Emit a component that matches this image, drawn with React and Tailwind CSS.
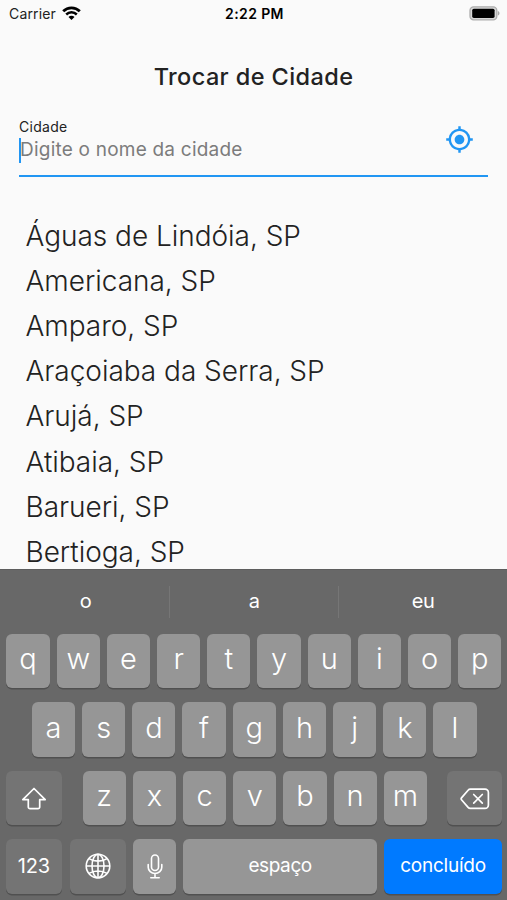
import React from 'react';
import { MdGpsFixed } from 'react-icons/md';

const cities = [
  'Águas de Lindóia, SP',
  'Americana, SP',
  'Amparo, SP',
  'Araçoiaba da Serra, SP',
  'Arujá, SP',
  'Atibaia, SP',
  'Barueri, SP',
  'Bertioga, SP',
];

const suggestions = ['o', 'a', 'eu'];

function StatusBar() {
  return (
    <div className="grid grid-cols-3 items-center h-[27px] pl-[9px] pr-[7px] text-black">
      <div className="flex items-center gap-[6px]">
        <span className="text-[14px] tracking-[0.15px] text-[#222222]">Carrier</span>
        <svg width="19" height="14" viewBox="0 0 19 14" fill="none" stroke="currentColor" className="-mt-px">
          <path d="M1.2 5.2a11.8 11.8 0 0 1 16.6 0" strokeWidth="2.8" />
          <path d="M4.2 8.5a7.6 7.6 0 0 1 10.6 0" strokeWidth="2.5" />
          <path d="M9.5 14 6.5 11a4.2 4.2 0 0 1 6 0z" fill="currentColor" stroke="none" />
        </svg>
      </div>
      <span className="text-center text-[14px] font-semibold tracking-[0.4px]">2:22 PM</span>
      <svg className="justify-self-end" width="31" height="15" viewBox="0 0 31 15">
        <rect x="1" y="0.8" width="26.8" height="13" rx="3.6" fill="#d8d8d8" stroke="#adadad" strokeWidth="1.3" />
        <rect x="3.2" y="2.7" width="22.4" height="9.2" rx="1.6" fill="#000" />
        <path d="M28.8 5v4.6c1-.4 1.7-1.2 1.7-2.3S29.8 5.4 28.8 5z" fill="#a9a9a9" />
      </svg>
    </div>
  );
}

function Key({ children, className = 'w-[43.2px] bg-[#969696] text-[29px] font-[350] pb-[4px]' }) {
  return (
    <button
      className={`flex h-[54.5px] shrink-0 items-center justify-center rounded-[6px] leading-none text-white shadow-[0_1.5px_0_#505050] ${className}`}
    >
      {children}
    </button>
  );
}

function KeyRow({ letters }) {
  return (
    <div className="flex gap-[7px]">
      {letters.split('').map((letter) => (
        <Key key={letter}>{letter}</Key>
      ))}
    </div>
  );
}

function Keyboard() {
  return (
    <div className="h-[331px] shrink-0 bg-[#686868] border-t border-[#5d5d5d] text-white">
      <div className="grid h-[63.5px] grid-cols-3 items-center">
        {suggestions.map((word, i) => (
          <div
            key={word}
            className={`flex h-[32px] items-center justify-center pb-[2px] text-[20px] tracking-[-0.6px] ${i > 0 ? 'border-l border-[#767676]' : 'pl-[2px]'}`}
          >
            {word}
          </div>
        ))}
      </div>

      <div className="flex flex-col gap-[14px]">
        <div className="flex justify-center pl-[0.8px]">
          <KeyRow letters="qwertyuiop" />
        </div>
        <div className="flex justify-center pl-[1.5px]">
          <KeyRow letters="asdfghjkl" />
        </div>
        <div className="flex justify-between pr-[5px] pl-[6px]">
          <Key className="w-[55.5px] bg-[#747474]">
            <svg width="26" height="24" viewBox="0 0 26 24" fill="none" stroke="currentColor" strokeWidth="1.7" strokeLinejoin="round" className="mt-[2px] ml-px">
              <path d="M13 1.5 24.2 12.6H18.7V20a1.7 1.7 0 0 1-1.7 1.7H9A1.7 1.7 0 0 1 7.3 20V12.6H1.8z" />
            </svg>
          </Key>
          <div className="pl-px">
            <KeyRow letters="zxcvbnm" />
          </div>
          <Key className="w-[55px] bg-[#747474]">
            <svg width="30" height="22" viewBox="0 0 30 22" fill="none" stroke="currentColor" strokeWidth="1.7" strokeLinejoin="round" strokeLinecap="round" className="mt-[2px]">
              <path d="M10.3 1.2H25a3.4 3.4 0 0 1 3.4 3.4V17a3.4 3.4 0 0 1-3.4 3.4H10.3a3 3 0 0 1-2.2-1L1.5 11.7a1.4 1.4 0 0 1 0-1.8L8.1 2.2a3 3 0 0 1 2.2-1z" />
              <path d="m13.7 6.5 8.6 8.6M22.3 6.5l-8.6 8.6" />
            </svg>
          </Key>
        </div>
        <div className="flex px-[5.7px]">
          <Key className="w-[56.3px] bg-[#747474] text-[20px] tracking-[-0.2px]">123</Key>
          <Key className="ml-[8px] w-[56.3px] bg-[#747474]">
            <svg width="26" height="26" viewBox="0 0 26 26" fill="none" stroke="currentColor" strokeWidth="1.6">
              <circle cx="13" cy="13" r="11.8" />
              <ellipse cx="13" cy="13" rx="6" ry="11.8" />
              <path d="M13 1.2v23.6M1.2 13h23.6M4 5.6c5 3.3 13 3.3 18 0M4 20.4c5-3.3 13-3.3 18 0" />
            </svg>
          </Key>
          <Key className="ml-[7px] w-[43.2px] bg-[#969696]">
            <svg width="16" height="25" viewBox="0 0 16 25" fill="none" stroke="currentColor" strokeWidth="1.6" strokeLinecap="round">
              <rect x="4.5" y="1" width="7" height="15.5" rx="3.5" />
              <path d="M1.2 10.5v2.7a6.8 6.3 0 0 0 13.6 0v-2.7M8 19.6v3.9M3.8 23.7h8.4" />
            </svg>
          </Key>
          <Key className="ml-[7px] w-[193.3px] bg-[#969696] text-[19px] tracking-[-0.4px] pb-px">espaço</Key>
          <Key className="ml-[7px] w-[118.5px] bg-[#007aff] text-[19px] tracking-[-0.25px] pb-px">concluído</Key>
        </div>
      </div>
    </div>
  );
}

function App() {
  return (
    <div className="flex h-[900px] w-[507px] flex-col overflow-hidden bg-[#fafafa] font-[Inter,sans-serif] text-[#222222]">
      <StatusBar />
      <h1 className="mt-[34px] text-center text-[23.5px] leading-[32px] font-medium tracking-[0.4px]">Trocar de Cidade</h1>

      {/* City field */}
      <div className="mx-[19px] mt-[25px] flex h-[59px] items-start justify-between border-b-2 border-[#2196f3]">
        <div>
          <label className="block text-[14px] leading-[18px] tracking-[0.3px]">Cidade</label>
          <div className="mt-px flex h-[26px] items-center">
            <span className="h-[25px] w-[2px] bg-[#2196f3]" />
            <span className="-ml-px text-[19px] leading-[24px] tracking-[0.22px] text-[#7c7c7c]">Digite o nome da cidade</span>
          </div>
        </div>
        <MdGpsFixed className="mt-[7px] mr-[14px] text-[29px] text-[#2196f3]" />
      </div>

      <ul className="min-h-0 flex-1 overflow-hidden pt-[36.6px] pl-[25.5px]">
        {cities.map((city) => (
          <li key={city} className="h-[45.2px] text-[28px] leading-[45.2px] font-light tracking-[-0.03px] whitespace-nowrap">
            {city}
          </li>
        ))}
      </ul>

      <Keyboard />
    </div>
  );
}

export default App;
